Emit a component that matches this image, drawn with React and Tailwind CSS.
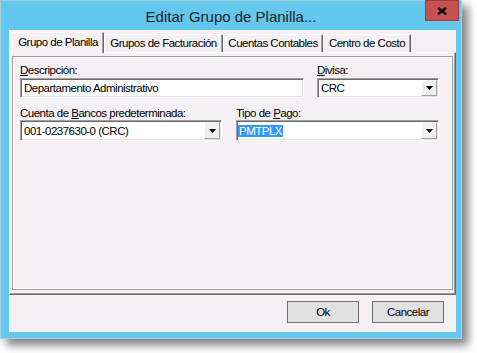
const Arrow = () => (
  <div className="flex h-full w-[16px] items-center justify-center border border-t-white border-l-white border-r-[#a0a0a0] border-b-[#a0a0a0] bg-[#f0f0f0]">
    <svg width="7" height="4" viewBox="0 0 7 4">
      <path d="M0 0h7L3.5 4z" fill="#000" />
    </svg>
  </div>
);

// campo hundido estilo Windows clásico
const Sunken = ({ className, children, combo }) => (
  <div
    className={`flex items-stretch border border-t-[#a0a0a0] border-l-[#a0a0a0] border-r-white border-b-white bg-white p-px shadow-[inset_1px_1px_0_#696969,inset_-1px_-1px_0_#e3e3e3] ${className}`}
  >
    <div className="flex flex-1 items-center pl-[2px]">{children}</div>
    {combo && <Arrow />}
  </div>
);

const Tab = ({ active, className, children }) => (
  <div
    className={
      active
        ? `relative z-10 -mb-px flex h-[21px] justify-center border-t border-l border-r border-t-white border-l-white border-r-[#696969] bg-[#f4f0f4] pt-[2px] shadow-[inset_-1px_0_0_#a0a0a0] ${className}`
        : `mt-[2px] flex h-[18px] justify-center border-t border-l border-r border-t-white border-l-white border-r-[#696969] bg-[#f4f0f4] pt-px shadow-[inset_-1px_0_0_#a0a0a0] ${className}`
    }
  >
    {children}
  </div>
);

const App = () => {
  return (
    <div className="h-[353px] w-[477px] bg-white font-['Liberation_Sans',Arial,sans-serif] text-[11.5px] leading-[14px] tracking-[-0.5px] text-black">
      {/* Ventana */}
      <div className="flex h-[339px] w-[462px] flex-col border border-[#a9cfe0] bg-[#63c7ee] pb-[6px] pl-[8px] pr-[5px] shadow-[6px_6px_9px_rgba(0,0,0,0.5)]">
        {/* Barra de título */}
        <div className="relative -ml-[8px] -mr-[5px] flex h-[29px] items-center justify-center pt-[2px]">
          <span className="text-[15px] leading-[18px] tracking-normal text-[#222]">Editar Grupo de Planilla...</span>
          <div className="absolute -top-px right-[2px] flex h-[21px] w-[34px] justify-center border border-[#9c3c3c] bg-[#c75050] pt-[6px]">
            <svg width="10" height="8" viewBox="0 0 10 8">
              <path d="M1 0.8L9 7.2M9 0.8L1 7.2" stroke="#111" strokeWidth="2.4" />
            </svg>
          </div>
        </div>

        {/* Área cliente */}
        <div className="flex flex-1 flex-col bg-[#f4f0f4]">
          <div className="flex items-start pl-[3px] pt-[2px]">
            <Tab active className="w-[92px]">Grupo de Planilla</Tab>
            <Tab className="w-[119px]">Grupos de Facturación</Tab>
            <Tab className="w-[100px]">Cuentas Contables</Tab>
            <Tab className="w-[88px]">Centro de Costo</Tab>
          </div>

          <div className="h-[243px] border border-t-white border-l-white border-r-[#696969] border-b-[#696969] shadow-[inset_-1px_-1px_0_#a0a0a0]">
            <div className="ml-[2px] mt-[3px] h-[234px] w-[441px] border border-[#a0a0a0]">
              <div className="h-full border border-white pl-[6px] pt-[5px]">
                <div className="flex gap-[13px]">
                  <div className="flex w-[284px] flex-col">
                    <span>
                      <span className="underline">D</span>escripción:
                    </span>
                    <Sunken className="mt-px h-[20px]">Departamento Administrativo</Sunken>
                  </div>
                  <div className="flex w-[122px] flex-col">
                    <span>
                      <span className="underline">D</span>ivisa:
                    </span>
                    <Sunken combo className="mt-px h-[20px]">CRC</Sunken>
                  </div>
                </div>

                <div className="mt-[8px] flex gap-[14px]">
                  <div className="flex w-[202px] flex-col">
                    <span>
                      Cuenta de <span className="underline">B</span>ancos predeterminada:
                    </span>
                    <Sunken combo className="h-[21px]">001-0237630-0 (CRC)</Sunken>
                  </div>
                  <div className="flex w-[203px] flex-col">
                    <span>
                      Tipo de <span className="underline">P</span>ago:
                    </span>
                    <Sunken combo className="h-[21px]">
                      <span className="-ml-[2px] inline-block h-[12px] bg-[#3399ff] px-px leading-[12px] text-white">PMTPLX</span>
                    </Sunken>
                  </div>
                </div>
              </div>
            </div>
          </div>

          {/* Botones */}
          <div className="mt-[6px] flex justify-end gap-[13px] pr-[12px]">
            <button className="flex h-[22px] w-[72px] items-center justify-center border border-[#707070] bg-[#e1e1e1]">Ok</button>
            <button className="flex h-[22px] w-[72px] items-center justify-center border border-[#707070] bg-[#e1e1e1]">Cancelar</button>
          </div>
        </div>
      </div>
    </div>
  );
};

export default App;
